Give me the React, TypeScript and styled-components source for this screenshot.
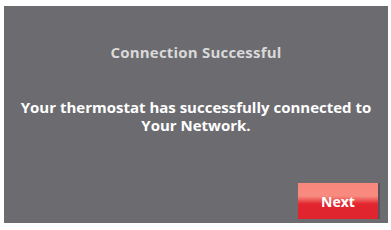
import React from "react";
import styled, { createGlobalStyle } from "styled-components";

const GlobalStyle = createGlobalStyle`
  html, body {
    margin: 0;
    padding: 0;
    background: #ffffff;
  }
  body {
    font-family: "Open Sans", "Liberation Sans", sans-serif;
  }
`;

const Page = styled.div`
  width: 391px;
  height: 230px;
  padding: 6px 3px 7px 4px;
  box-sizing: border-box;
  background: #ffffff;
`;

const Screen = styled.div`
  height: 100%;
  background: #6c6c70;
  display: flex;
  flex-direction: column;
  align-items: center;
  box-sizing: border-box;
  padding-top: 36px;
`;

const Title = styled.div`
  font-size: 15px;
  font-weight: 700;
  color: #d9d9d9;
  line-height: 20px;
  letter-spacing: 0.2px;
`;

const Message = styled.div`
  margin-top: 36px;
  font-size: 15px;
  font-weight: 700;
  color: #ffffff;
  text-align: center;
`;

const Line = styled.div`
  line-height: 18px;
  height: 18px;
  white-space: nowrap;
`;

const Footer = styled.div`
  margin-top: auto;
  align-self: stretch;
  display: flex;
  justify-content: flex-end;
  padding: 0 8px 4px 0;
`;

const NextButton = styled.button`
  width: 82px;
  height: 36px;
  border: none;
  border-right: 2px solid #55555a;
  padding: 0;
  font-family: inherit;
  font-size: 14px;
  font-weight: 700;
  color: #ffffff;
  background: linear-gradient(
    to bottom,
    #f8877c 0%,
    #f88b80 36%,
    #ef6a63 44%,
    #e1262f 58%,
    #e0242d 100%
  );
  cursor: pointer;
`;

export default function App() {
  return (
    <>
      <GlobalStyle />
      <Page>
        <Screen>
          <Title>Connection Successful</Title>
          <Message>
            <Line>Your thermostat has successfully connected to</Line>
            <Line>Your Network.</Line>
          </Message>
          <Footer>
            <NextButton>Next</NextButton>
          </Footer>
        </Screen>
      </Page>
    </>
  );
}
